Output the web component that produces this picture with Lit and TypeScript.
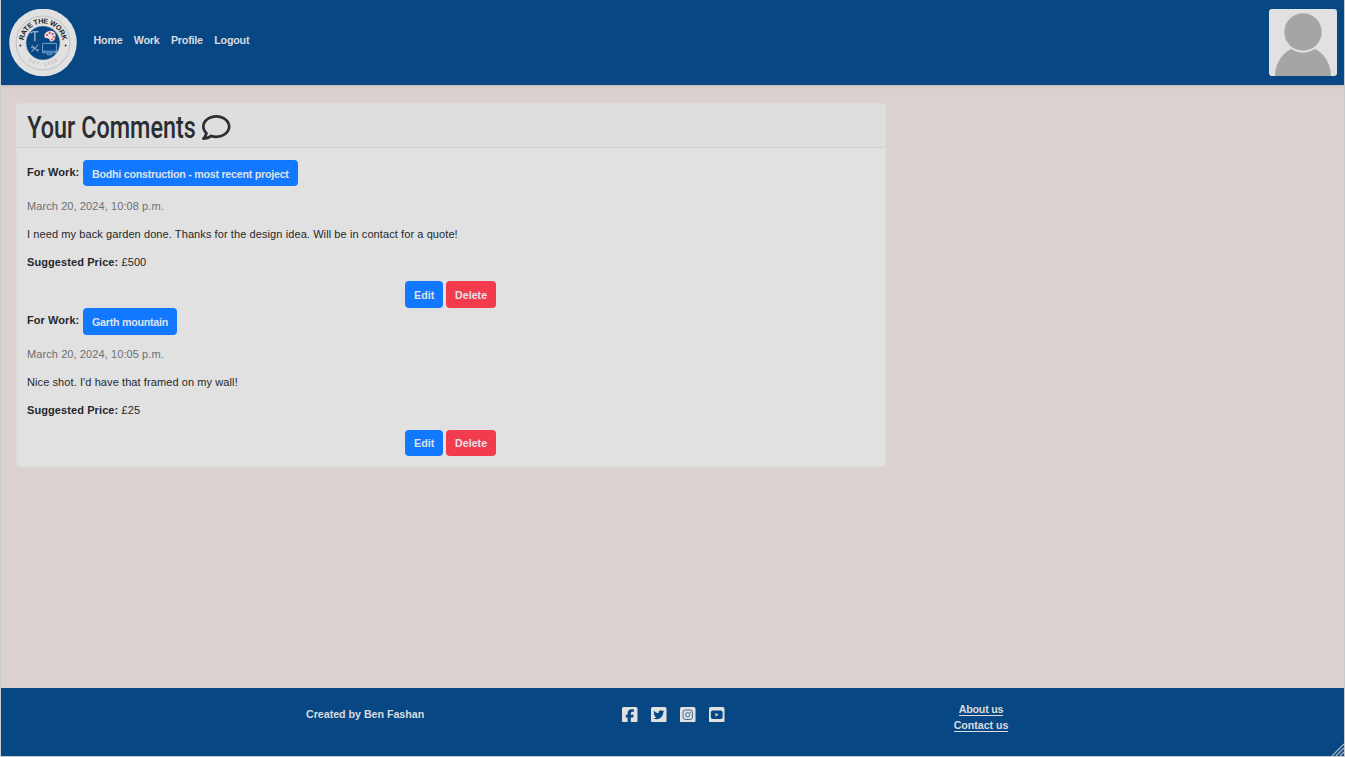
import { LitElement, html, css, svg } from "lit";
import { customElement, property } from "lit/decorators.js";

interface WorkComment {
  work: string;
  date: string;
  text: string;
  price: string;
}

const COMMENTS: WorkComment[] = [
  {
    work: "Bodhi construction - most recent project",
    date: "March 20, 2024, 10:08 p.m.",
    text: "I need my back garden done. Thanks for the design idea. Will be in contact for a quote!",
    price: "£500",
  },
  {
    work: "Garth mountain",
    date: "March 20, 2024, 10:05 p.m.",
    text: "Nice shot. I'd have that framed on my wall!",
    price: "£25",
  },
];

@customElement("site-logo")
class SiteLogo extends LitElement {
  static styles = css`
    :host { display: block; width: 68px; height: 68px; }
    svg { display: block; }
    text { font-family: "Liberation Sans", Arial, sans-serif; }
    .name { font-size: 7.2px; font-weight: 700; fill: #1c1c1c; }
    .est { font-size: 4.2px; fill: #a5a5a5; }
  `;
  render() {
    return html`<svg width="68" height="68" viewBox="0 0 68 68">
      <defs>
        <path id="top" d="M14.9 37.9A19.5 19.5 0 1 1 53.1 37.9" />
        <path id="bottom" d="M10.5 33A23.5 23.5 0 0 0 57.5 33" />
      </defs>
      <circle cx="34" cy="33.5" r="33.8" fill="#e1e1e1" />
      <circle cx="34" cy="34" r="27" fill="none" stroke="#aeb0b2" stroke-width=".7" />
      <circle cx="34" cy="34" r="17" fill="#074783" stroke="#b5bcc4" stroke-width=".5" />
      <text class="name"><textPath href="#top" startOffset="50%" text-anchor="middle" textLength="56">RATE THE WORK</textPath></text>
      <text class="est"><textPath href="#bottom" startOffset="50%" text-anchor="middle" textLength="31">EST. 2024</textPath></text>
      <circle cx="11.4" cy="36.5" r=".9" fill="#222" />
      <circle cx="56.6" cy="36.5" r=".9" fill="#222" />
      <g fill="none" stroke="#c3d2e0" stroke-width="1.1">
        <path d="M21.8 24.1q1-1.6 3.5-1.3h4.2M25.9 22.8v9.4" />
        <path d="M22.8 36.2l6.2 6.4M29.3 35.8l-6.7 7M22 38.6l3 .4M27.6 41l2.2-.3" stroke-width=".9" />
        <path d="M33.6 34.4h13.8v9.4H33.6zM33.6 42.2h13.8M39 44l-.8 1.7h4.6L42 44" stroke="#79aedb" stroke-width=".9" />
      </g>
      <path d="M40.2 21.9c4.1-.8 6.6 1.7 6.4 5.2-.2 3.9-2.6 6-4.9 5.3-1.4-.5-.6-2.2-2-2.7-1.5-.5-3.9.1-4.3-2.1-.4-2.7 2-5.2 4.8-5.7z" fill="#f3dadd" />
      <g><circle cx="38" cy="26" r="1.1" fill="#e34b4b" /><circle cx="40.7" cy="23.9" r="1.1" fill="#e34b4b" /><circle cx="43.8" cy="25" r="1.1" fill="#4467c4" /><circle cx="45" cy="28" r="1.1" fill="#e34b4b" /><circle cx="43" cy="30.5" r="1" fill="#e34b4b" /></g>
    </svg>`;
  }
}

@customElement("comment-entry")
class CommentEntry extends LitElement {
  @property({ attribute: false }) comment!: WorkComment;
  static styles = css`
    :host { display: block; height: 148.4px; }
    p { margin: 0; height: 28px; line-height: 28px; white-space: nowrap; letter-spacing: .09px; }
    .work { display: flex; height: 26.4px; margin-bottom: 5.6px; }
    .label { line-height: 24px; width: 56px; letter-spacing: .06px; }
    .date { color: #6d6f72; letter-spacing: .09px; }
    .actions { display: flex; justify-content: center; gap: 3px; margin: 5.4px 1px 0 0; }
    .btn {
      box-sizing: border-box; height: 26.4px; padding: .7px 0 0 9px; border: 0; border-radius: 4px;
      font: 700 10.7px/27px "Liberation Sans", Arial, sans-serif; color: #dfe2e8; text-align: left;
      background: #1278ff; white-space: nowrap; letter-spacing: 0;
    }
    .project { padding-right: 9px; letter-spacing: -.25px; }
    .edit { width: 38px; }
    .danger { width: 50px; background: #f23c4d; }
  `;
  render() {
    const c = this.comment;
    return html`
      <div class="work"><b class="label">For Work:</b><button class="btn project">${c.work}</button></div>
      <p class="date">${c.date}</p>
      <p>${c.text}</p>
      <p><b>Suggested Price:</b> ${c.price}</p>
      <div class="actions"><button class="btn edit">Edit</button><button class="btn danger">Delete</button></div>
    `;
  }
}

const icon = (shape: unknown) => html`<svg width="15.5" height="15.5" viewBox="0 32 448 448" fill="#e1e1e1">${shape}</svg>`;

const SOCIAL = [
  svg`<path d="M48 32C21.5 32 0 53.5 0 80V432c0 26.5 21.5 48 48 48h114.2V334.2H109.4V256h52.8V222.3c0-87.1 39.4-127.5 125-127.5c16.2 0 44.2 3.2 55.7 6.4V172c-6-.6-16.5-1-29.6-1c-42 0-58.2 15.9-58.2 57.2V256h83.6l-14.4 78.2H255V480H400c26.5 0 48-21.5 48-48V80c0-26.5-21.5-48-48-48H48z"/>`,
  svg`<path d="M400 32H48C21.5 32 0 53.5 0 80v352c0 26.5 21.5 48 48 48h352c26.5 0 48-21.5 48-48V80c0-26.5-21.5-48-48-48zm-48.9 158.8c.2 2.8.2 5.7.2 8.5 0 86.7-66 186.6-186.6 186.6-37.2 0-71.7-10.8-100.7-29.4 5.3.6 10.4.8 15.8.8 30.7 0 58.9-10.4 81.4-28-28.8-.6-53-19.5-61.3-45.5 10.1 1.5 19.2 1.5 29.6-1.2-30-6.1-52.5-32.5-52.5-64.4v-.8c8.7 4.9 18.9 7.9 29.6 8.3a65.447 65.447 0 0 1-29.2-54.6c0-12.2 3.2-23.4 8.9-33.1 32.3 39.8 80.8 65.8 135.2 68.6-9.3-44.5 24-80.6 64-80.6 18.9 0 35.9 7.9 47.9 20.7 14.8-2.8 29-8.3 41.6-15.8-4.9 15.2-15.2 28-28.8 36.1 13.2-1.4 26-5.1 37.8-10.2-8.9 13.1-20.1 24.7-32.9 34z"/>`,
  svg`<rect y="32" width="448" height="448" rx="48"/><g fill="none" stroke="#074783" stroke-width="22"><rect x="88" y="120" width="272" height="272" rx="66"/><circle cx="224" cy="256" r="62"/></g><circle cx="298" cy="182" r="15" fill="#074783"/>`,
  svg`<rect y="32" width="448" height="448" rx="48"/><rect x="54" y="134" width="340" height="244" rx="56" fill="#074783"/><path d="M187 202l95 54-95 54z"/>`,
];

@customElement("app-root")
class AppRoot extends LitElement {
  static styles = css`
    :host {
      display: flex; flex-direction: column; box-sizing: border-box; width: 1345px; height: 757px;
      border: solid #c9cccf; border-width: 0 1px 1px; background: #dbd1d0; color: #25282b;
      font: 11px/16px "Liberation Sans", Arial, sans-serif; overflow: hidden;
    }
    .nav { display: flex; height: 85px; box-sizing: border-box; background: #074783; padding: 9px 7px 0 8px; flex: none; box-shadow: 0 1px 3px #0002; }
    .links { display: flex; gap: 11.3px; padding: 23px 0 0 16.5px; flex: 1; }
    .links a { font-size: 10.7px; letter-spacing: -.18px; }
    a { color: #dadcdf; font-weight: 700; text-decoration: none; }
    .avatar { display: block; width: 68px; height: 67px; }
    main { flex: 1; padding: 18px 0 0 15px; }
    .card { width: 870px; height: 364px; box-sizing: border-box; background: #e1e1e1; border: 1px solid #dddcdc; border-radius: 4px; }
    .head { height: 44px; box-sizing: border-box; border-bottom: 1px solid #d0d1d2; border-radius: 3px 3px 0 0; background: #dedede; display: flex; padding-left: 10px; }
    h1 { margin: 0; width: 175px; height: 43px; font-weight: 500; }
    h1 svg { display: block; overflow: visible; }
    h1 text { font-family: Roboto, sans-serif; font-size: 31.5px; font-weight: 500; fill: #2a2d31; }
    .bubble { margin-top: 10.6px; }
    .list { padding: 12px 10px 0 10px; }
    footer { height: 68px; flex: none; background: #074783; display: grid; grid-template-columns: 448px 448px 1fr; color: #dadcdf; font-weight: 700; position: relative; }
    .made { padding: 18px 0 0 305px; white-space: nowrap; font-size: 10.7px; letter-spacing: -.03px; }
    .social { display: flex; gap: 13.5px; padding: 18.7px 0 0 173px; }
    .about { display: flex; flex-direction: column; align-items: center; padding-top: 14px; width: 168px; }
    .about a { height: 13px; line-height: 15px; font-size: 10.7px; border-bottom: 1px solid #dadcdf; margin-bottom: 2px; letter-spacing: -.05px; }
    .about a:first-child { letter-spacing: -.25px; }
    .grip { position: absolute; right: 0; bottom: 0; }
  `;
  render() {
    return html`
      <nav class="nav">
        <site-logo></site-logo>
        <div class="links">${["Home", "Work", "Profile", "Logout"].map((t) => html`<a href="#">${t}</a>`)}</div>
        <svg class="avatar" viewBox="0 0 68 67">
          <defs><clipPath id="frame"><rect width="68" height="67" rx="3" /></clipPath></defs>
          <g clip-path="url(#frame)">
            <rect width="68" height="67" fill="#e1e1e1" />
            <ellipse cx="34" cy="67" rx="28" ry="30" fill="#a5a5a5" />
            <circle cx="34" cy="23" r="20.7" fill="#e1e1e1" />
            <circle cx="34" cy="23" r="18.7" fill="#a5a5a5" />
          </g>
        </svg>
      </nav>
      <main>
        <section class="card">
          <header class="head">
            <h1><svg width="175" height="43"><text x="0.3" y="33.7" textLength="168.5" lengthAdjust="spacingAndGlyphs">Your Comments</text></svg></h1>
            <svg class="bubble" width="28.5" height="25" viewBox="0 32 512 448" fill="#2a2d31"><path d="M256 32C114.6 32 0 125.1 0 240c0 47.6 19.9 91.2 52.9 126.3C38 405.7 7 439.1 6.5 439.5c-6.6 7-8.4 17.2-4.6 26S14.4 480 24 480c61.5 0 110-25.7 139.1-46.3C192 442.8 223.2 448 256 448c141.4 0 256-93.1 256-208S397.4 32 256 32zm0 368c-26.7 0-53.1-4.1-78.4-12.1l-22.7-7.2-19.5 13.8c-14.3 10.1-33.9 21.4-57.5 29 7.3-12.1 14.4-25.7 19.9-40.2l10.6-28.1-20.6-21.8C69.7 314.1 48 282.2 48 240c0-88.2 93.3-160 208-160s208 71.8 208 160-93.3 160-208 160z" /></svg>
          </header>
          <div class="list">${COMMENTS.map((c) => html`<comment-entry .comment=${c}></comment-entry>`)}</div>
        </section>
      </main>
      <footer>
        <div class="made">Created by Ben Fashan</div>
        <div class="social">${SOCIAL.map(icon)}</div>
        <div class="about"><a href="#">About us</a><a href="#">Contact us</a></div>
        <svg class="grip" width="13" height="13" stroke="#a9b4bf" stroke-width="1.3"><path d="M1 13L13 1M5 13L13 5M9 13L13 9" /></svg>
      </footer>
    `;
  }
}
